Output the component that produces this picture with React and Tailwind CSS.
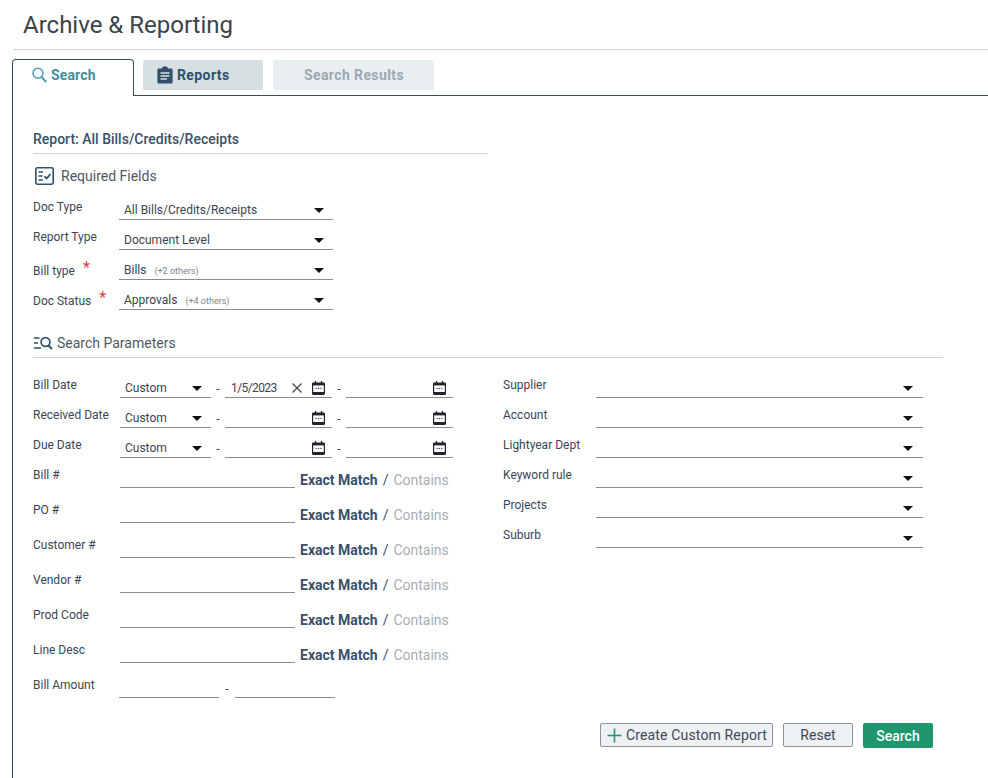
import React from "react";

const Caret = () => (
  <svg width="10" height="5" viewBox="0 0 10 5" className="shrink-0"><path d="M0 0H10L5 5Z" fill="#111" /></svg>
);

const Calendar = () => (
  <svg width="13" height="14" viewBox="0 0 13 14" className="shrink-0">
    <path d="M3.5 0V3M9.5 0V3" stroke="#23232e" strokeWidth="1.3" fill="none" />
    <rect x="0.6" y="2" width="11.8" height="11.4" rx="0.8" stroke="#23232e" strokeWidth="1.2" fill="none" />
    <rect x="0.6" y="2" width="11.8" height="2.4" fill="#23232e" />
    <rect x="0.6" y="11" width="11.8" height="2.4" fill="#23232e" />
    <path d="M3.5 7.4H4.7M5.9 7.4H7.1M8.3 7.4H9.5" stroke="#23232e" strokeWidth="1" />
  </svg>
);

const Select = ({ w, children }) => (
  <div className={`${w} h-[30px] flex items-center justify-between border-b border-[#8c8c8c] pr-[9px] pt-[11px] shrink-0`}>
    <div className="text-[12px] text-[#3b4350] pl-[5px] truncate leading-[16px]">{children}</div>
    <Caret />
  </div>
);

const Others = ({ children, first }) => (
  <span>
    {first}
    <span className="text-[9px] text-[#7d858d] ml-[8px]">{children}</span>
  </span>
);

const Label = ({ children, w = "w-[86px]", star }) => (
  <div className={`${w} shrink-0 text-[12px] text-[#3a4656] leading-[16px] ${star ? "pt-[13px]" : "pt-[9px]"}`}>
    {children}
    {star && <span className="text-[#e0413f] text-[16px] leading-[10px] ml-[8px] align-top">*</span>}
  </div>
);

const Dash = ({ w }) => (
  <div className={`${w} shrink-0 text-[12px] text-[#3b4350] text-center pt-[13px] leading-[16px]`}>-</div>
);

const DateInput = ({ value }) => (
  <div className="w-[107px] h-[30px] flex items-center justify-between border-b border-[#8c8c8c] pr-[7px] pl-[6px] pt-[11px] shrink-0">
    <span className="text-[12px] tracking-[-0.6px] text-[#3b4350] leading-[16px]">{value}</span>
    <div className="flex items-center gap-[10px]">
      {value && (
        <svg width="10" height="10" viewBox="0 0 10 10"><path d="M0.5 0.5L9.5 9.5M9.5 0.5L0.5 9.5" stroke="#3b4350" strokeWidth="1.2" /></svg>
      )}
      <Calendar />
    </div>
  </div>
);

const DateRow = ({ label, value }) => (
  <div className="flex h-[30px]">
    <Label>{label}</Label>
    <div className="w-[1px] shrink-0" />
    <div className="flex">
      <div className="w-[91px] h-[30px] flex items-center justify-between border-b border-[#8c8c8c] pr-[9px] pt-[11px] shrink-0">
        <span className="text-[12px] text-[#3b4350] pl-[5px] leading-[16px]">Custom</span>
        <Caret />
      </div>
      <Dash w="w-[14px]" />
      <DateInput value={value} />
      <Dash w="w-[14px]" />
      <DateInput />
    </div>
  </div>
);

const MatchRow = ({ label }) => (
  <div className="flex h-[35px]">
    <Label>{label}</Label>
    <div className="w-[1px] shrink-0" />
    <div className="w-[175px] h-[30px] border-b border-[#8c8c8c] shrink-0" />
    <div className="ml-[5px] pt-[14px] text-[14px] leading-[16px] whitespace-nowrap">
      <span className="font-bold text-[#3b5068]">Exact Match</span>
      <span className="text-[#3b5068] mx-[5px]">/</span>
      <span className="text-[#a7adb5]">Contains</span>
    </div>
  </div>
);

const RightRow = ({ label }) => (
  <div className="flex h-[30px]">
    <Label w="w-[93px]">{label}</Label>
    <div className="w-[327px] h-[30px] flex items-center justify-end border-b border-[#8c8c8c] pr-[10px] pt-[11px] shrink-0">
      <Caret />
    </div>
  </div>
);

export default function App() {
  return (
    <div className="w-[988px] h-[778px] bg-white overflow-hidden font-['Roboto',sans-serif]">
      <h1 className="ml-[13px] pl-[10px] h-[50px] border-b border-[#cdd3d6] text-[24px] leading-[50px] text-[#3c4348] font-normal">
        Archive &amp; Reporting
      </h1>

      <div className="ml-[12px] mt-[9px] flex h-[37px]">
        <div className="w-[122px] border border-b-0 border-[#2f4f6b] rounded-t-[4px] flex items-start pl-[19px] pt-[7px] gap-[4px] shrink-0">
          <svg width="15" height="16" viewBox="0 0 15 16" fill="none">
            <circle cx="6" cy="6.3" r="5" stroke="#4a9bb0" strokeWidth="1.5" />
            <path d="M9.6 10L14.2 15" stroke="#4a9bb0" strokeWidth="1.9" />
          </svg>
          <span className="text-[14px] font-bold tracking-[0.15px] text-[#3d8fa0] leading-[16px]">Search</span>
        </div>
        <div className="flex-1 border-b border-[#2f4f6b] flex items-start gap-[10px] pl-[9px] pt-[1px]">
          <div className="w-[120px] h-[30px] bg-[#d6dfe2] rounded-[2px] flex items-center pl-[14px] gap-[4px]">
            <svg width="16" height="18" viewBox="0 0 16 18">
              <path d="M2 2.5H5C5.3 1 6.5 0.3 8 0.3S10.7 1 11 2.5H14C15 2.5 15.6 3.1 15.6 4V16C15.6 17 15 17.6 14 17.6H2C1 17.6 0.4 17 0.4 16V4C0.4 3.1 1 2.5 2 2.5Z" fill="#2f4f6b" />
              <path d="M3.5 7H12.5M3.5 10H12.5M3.5 13H10" stroke="#d6dfe2" strokeWidth="1.4" />
            </svg>
            <span className="text-[14px] font-bold tracking-[0.4px] text-[#2f4f6b] leading-[16px]">Reports</span>
          </div>
          <div className="w-[161px] h-[30px] bg-[#e9eef0] rounded-[2px] flex items-center justify-center pl-[1px]">
            <span className="text-[14px] font-bold tracking-[0.4px] text-[#9aa8b3] leading-[16px]">Search Results</span>
          </div>
        </div>
      </div>

      <div className="ml-[12px] h-[682px] border-l border-[#2f4f6b] pl-[20px] relative">
        <div className="w-[455px] h-[58px] border-b border-[#cdd3d6] pt-[34px] text-[14px] font-medium text-[#3b5068] leading-[19px]">
          Report: All Bills/Credits/Receipts
        </div>

        <div className="flex items-center h-[34px] pl-[2px] gap-[7px] mt-[5px]">
          <svg width="19" height="18" viewBox="0 0 19 18" fill="none">
            <rect x="0.8" y="0.8" width="17.4" height="16.4" rx="1.6" stroke="#2f4f6b" strokeWidth="1.6" />
            <path d="M3.5 5H8M3.5 9H7.5M3.5 13H8" stroke="#2f4f6b" strokeWidth="1.7" />
            <path d="M9.5 9.3L11.7 11.5L15.5 7" stroke="#2f4f6b" strokeWidth="1.8" />
          </svg>
          <span className="text-[14px] text-[#4a5866] leading-[18px]">Required Fields</span>
        </div>

        <div className="flex h-[30px] -mt-[3px]">
          <Label>Doc Type</Label>
          <Select w="w-[214px]">All Bills/Credits/Receipts</Select>
        </div>
        <div className="flex h-[30px]">
          <Label>Report Type</Label>
          <Select w="w-[214px]">Document Level</Select>
        </div>
        <div className="flex h-[30px]">
          <Label star>Bill type</Label>
          <Select w="w-[214px]"><Others first="Bills">(+2 others)</Others></Select>
        </div>
        <div className="flex h-[30px]">
          <Label star>Doc Status</Label>
          <Select w="w-[214px]"><Others first="Approvals">(+4 others)</Others></Select>
        </div>

        <div className="w-[910px] h-[48px] border-b border-[#cdd3d6] flex items-center pt-[23px] pb-[4px] gap-[4px]">
          <svg width="20" height="14" viewBox="0 0 20 14" fill="none">
            <path d="M1 2H6.5M1 7H5M1 12H8" stroke="#2f4f6b" strokeWidth="1.7" />
            <circle cx="12.5" cy="6" r="4.4" stroke="#2f4f6b" strokeWidth="1.7" />
            <path d="M15.5 9.5L19 13" stroke="#2f4f6b" strokeWidth="2" />
          </svg>
          <span className="text-[14px] text-[#4a5866] leading-[18px]">Search Parameters</span>
        </div>

        <div className="flex mt-[10px] h-[340px]">
          <div className="w-[470px] shrink-0">
            <DateRow label="Bill Date" value="1/5/2023" />
            <DateRow label="Received Date" />
            <DateRow label="Due Date" />
            <MatchRow label="Bill #" />
            <MatchRow label="PO #" />
            <MatchRow label="Customer #" />
            <MatchRow label="Vendor #" />
            <MatchRow label="Prod Code" />
            <MatchRow label="Line Desc" />
            <div className="flex h-[30px]">
              <Label>Bill Amount</Label>
              <div className="w-[100px] h-[30px] border-b border-[#8c8c8c] shrink-0" />
              <Dash w="w-[16px]" />
              <div className="w-[100px] h-[30px] border-b border-[#8c8c8c] shrink-0" />
            </div>
          </div>
          <div>
            <RightRow label="Supplier" />
            <RightRow label="Account" />
            <RightRow label="Lightyear Dept" />
            <RightRow label="Keyword rule" />
            <RightRow label="Projects" />
            <RightRow label="Suburb" />
          </div>
        </div>

        <div className="w-[900px] flex justify-end gap-[10px] mt-[15px]">
          <button className="w-[173px] h-[24px] bg-[#edf1f4] border border-[#8e9399] rounded-[2px] flex items-center pl-[6px] gap-[4px] text-[14px] tracking-[0.15px] text-[#3b4a5c] leading-[16px]">
            <svg width="15" height="15" viewBox="0 0 15 15"><path d="M7.5 0.5V14.5M0.5 7.5H14.5" stroke="#1f966c" strokeWidth="1.6" /></svg>
            Create Custom Report
          </button>
          <button className="w-[70px] h-[24px] bg-[#edf1f4] border border-[#8e9399] rounded-[2px] text-[14px] text-[#3b4a5c] leading-[16px]">Reset</button>
          <button className="w-[70px] h-[25px] bg-[#1f966c] rounded-[2px] text-[14px] font-medium text-white leading-[16px]">Search</button>
        </div>
      </div>
    </div>
  );
}
